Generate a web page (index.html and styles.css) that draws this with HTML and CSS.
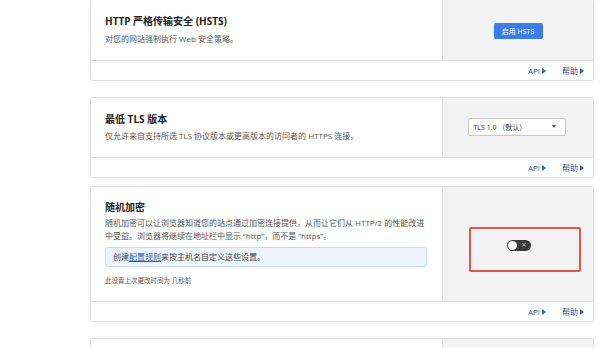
FILE: index.html
```html
<!DOCTYPE html>
<html lang="zh-CN">
<head>
<meta charset="utf-8">
<link rel="stylesheet" href="styles.css">
</head>
<body>
<div class="page">
  <section class="card first">
    <div class="card-main">
      <div class="card-left">
        <h3 class="title">HTTP 严格传输安全 (HSTS)</h3>
        <p class="desc">对您的网站强制执行 Web 安全策略。</p>
      </div>
      <div class="card-right">
        <button class="btn">启用 HSTS</button>
      </div>
    </div>
    <div class="card-footer">
      <a class="flink">API <span class="tri"></span></a>
      <a class="flink">帮助 <span class="tri"></span></a>
    </div>
  </section>

  <section class="card second">
    <div class="card-main">
      <div class="card-left">
        <h3 class="title">最低 TLS 版本</h3>
        <p class="desc">仅允许来自支持所选 TLS 协议版本或更高版本的访问者的 HTTPS 连接。</p>
      </div>
      <div class="card-right">
        <div class="select"><span>TLS 1.0 （默认）</span><span class="caret"></span></div>
      </div>
    </div>
    <div class="card-footer">
      <a class="flink">API <span class="tri"></span></a>
      <a class="flink">帮助 <span class="tri"></span></a>
    </div>
  </section>

  <section class="card third">
    <div class="card-main">
      <div class="card-left">
        <h3 class="title">随机加密</h3>
        <p class="desc">随机加密可以让浏览器知道您的站点通过加密连接提供，从而让它们从 HTTP/2 的性能改进中受益。浏览器将继续在地址栏中显示 “http”，而不是 “https”。</p>
        <div class="notice">创建<a class="rule-link">配置规则</a>来按主机名自定义这些设置。</div>
        <p class="meta">此设置上次更改时间为 几秒前</p>
      </div>
      <div class="card-right toggle-cell">
        <div class="toggle"><span class="knob"></span><span class="x">×</span></div>
        <div class="highlight"></div>
      </div>
    </div>
    <div class="card-footer">
      <a class="flink">API <span class="tri"></span></a>
      <a class="flink">帮助 <span class="tri"></span></a>
    </div>
  </section>

  <section class="card fourth">
    <div class="card-main">
      <div class="card-left tall"></div>
      <div class="card-right"></div>
    </div>
  </section>
</div>
</body>
</html>
```

FILE: styles.css
```css
* { box-sizing: border-box; }
html, body { margin: 0; padding: 0; background: #fff; }
body {
  font-family: "Open Sans", "Noto Sans CJK SC", sans-serif;
  color: #333;
  overflow: hidden;
  height: 349px;
}
.page {
  width: 504px;
  margin-left: 90px;
  display: flex;
  flex-direction: column;
}
.card {
  border: 1px solid #dedede;
  border-radius: 3px;
  background: #fff;
  overflow: hidden;
}
.first { margin-top: -1px; }
.second { margin-top: 16px; }
.third { margin-top: 8px; }
.fourth { margin-top: 16px; border-bottom: none; border-radius: 3px 3px 0 0; }
.card-main { display: flex; }
.card-left {
  flex: 0 0 351px;
  padding: 15px 15px 15px 14px;
}
.card-left.tall { height: 8px; padding: 0; }
.card-right {
  flex: 1;
  background: #f2f2f2;
  border-left: 1px solid #e0e0e0;
  display: flex;
  align-items: center;
  justify-content: center;
  position: relative;
}
.title {
  margin: 0 0 3px;
  font-size: 10px;
  line-height: 13px;
  font-weight: 700;
  color: #222;
}
.desc {
  margin: 0;
  font-size: 8px;
  line-height: 13px;
  color: #555;
}
.first .desc { margin-top: 4px; }
.card-footer {
  height: 20px;
  border-top: 1px solid #dedede;
  display: flex;
  justify-content: flex-end;
  align-items: center;
  gap: 16px;
  padding-right: 9px;
}
.flink {
  font-size: 8px;
  color: #2b4f8c;
  display: flex;
  align-items: center;
  gap: 2px;
}
.tri {
  display: inline-block;
  width: 0; height: 0;
  border-top: 3px solid transparent;
  border-bottom: 3px solid transparent;
  border-left: 4px solid #2b5fb0;
}
.btn {
  width: 49px;
  height: 16px;
  border: none;
  border-radius: 2px;
  background: #3a7de8;
  color: #fff;
  font-family: "Open Sans", "Noto Sans CJK SC", sans-serif;
  font-size: 7px;
  padding: 0;
  margin-top: 1px;
}
.select {
  width: 98px;
  height: 18px;
  background: #fff;
  border: 1px solid #c8c8c8;
  border-radius: 2px;
  display: flex;
  align-items: center;
  justify-content: space-between;
  padding: 0 9px 0 5px;
  font-size: 7px;
  color: #333;
  margin-left: -3px;
  margin-top: -2px;
}
.caret {
  width: 0; height: 0;
  border-left: 2.5px solid transparent;
  border-right: 2.5px solid transparent;
  border-top: 3px solid #555;
}
.third .card-left { padding-top: 14px; padding-bottom: 15px; }
.third .title { margin-bottom: 2px; }
.notice {
  margin-top: 5px;
  height: 20px;
  border: 1px solid #c9d9ef;
  border-radius: 3px;
  background: #eef4fd;
  font-size: 8px;
  line-height: 18px;
  padding-left: 7px;
  color: #444;
}
.rule-link {
  color: #2f5ea8;
  text-decoration: underline;
}
.meta {
  margin: 9px 0 0;
  font-size: 6.5px;
  line-height: 10px;
  color: #555;
}
.toggle {
  width: 24px;
  height: 11px;
  border-radius: 6px;
  background: #3a3a3a;
  position: relative;
  margin-top: 2px;
  margin-left: 1px;
}
.knob {
  position: absolute;
  left: 1px;
  top: 1px;
  width: 9px;
  height: 9px;
  border-radius: 50%;
  background: #fff;
}
.x {
  position: absolute;
  right: 4px;
  top: -1px;
  font-size: 9px;
  line-height: 12px;
  color: #bbb;
}
.highlight {
  position: absolute;
  left: 26px;
  top: 40px;
  width: 112px;
  height: 45px;
  border: 2px solid #e2574c;
  border-radius: 2px;
}
```
